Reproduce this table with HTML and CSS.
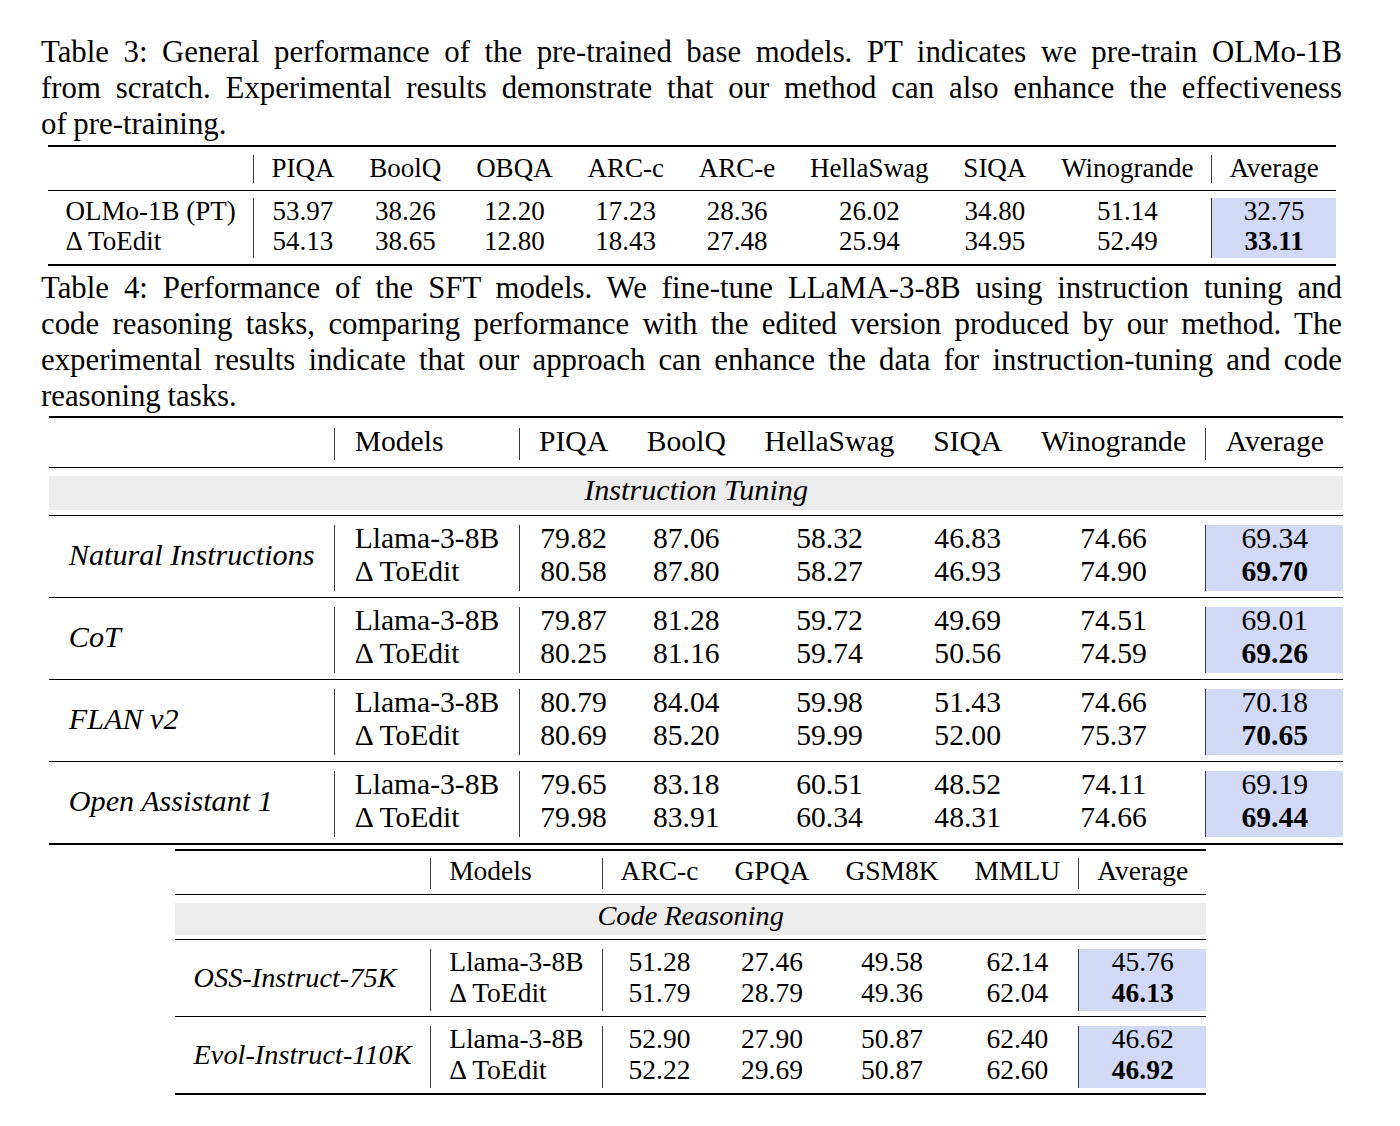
FILE: index.html
```html
<!DOCTYPE html>
<html lang="en">
<head>
<meta charset="utf-8">
<title>Tables 3 and 4</title>
<link rel="stylesheet" href="styles.css">
</head>
<body>
<div class="page">
  <p class="caption cap3">
    <span class="ln">Table 3: General performance of the pre-trained base models. PT indicates we pre-train OLMo-1B</span>
    <span class="ln">from scratch. Experimental results demonstrate that our method can also enhance the effectiveness</span>
    <span class="ln last">of pre-training.</span>
  </p>
  <table class="t t3">
    <thead>
      <tr>
        <th class="l"><div class="c"></div></th>
        <th><div class="c bar">PIQA</div></th>
        <th><div class="c">BoolQ</div></th>
        <th><div class="c">OBQA</div></th>
        <th><div class="c">ARC-c</div></th>
        <th><div class="c">ARC-e</div></th>
        <th><div class="c">HellaSwag</div></th>
        <th><div class="c">SIQA</div></th>
        <th><div class="c">Winogrande</div></th>
        <th><div class="c bar">Average</div></th>
      </tr>
    </thead>
    <tbody>
      <tr>
        <td class="l"><div class="c"><div>OLMo-1B (PT)</div><div>Δ ToEdit</div></div></td>
        <td><div class="c bar"><div>53.97</div><div>54.13</div></div></td>
        <td><div class="c"><div>38.26</div><div>38.65</div></div></td>
        <td><div class="c"><div>12.20</div><div>12.80</div></div></td>
        <td><div class="c"><div>17.23</div><div>18.43</div></div></td>
        <td><div class="c"><div>28.36</div><div>27.48</div></div></td>
        <td><div class="c"><div>26.02</div><div>25.94</div></div></td>
        <td><div class="c"><div>34.80</div><div>34.95</div></div></td>
        <td><div class="c"><div>51.14</div><div>52.49</div></div></td>
        <td><div class="c bar hl"><div>32.75</div><div><b>33.11</b></div></div></td>
      </tr>
    </tbody>
  </table>

  <p class="caption cap4">
    <span class="ln">Table 4: Performance of the SFT models. We fine-tune LLaMA-3-8B using instruction tuning and</span>
    <span class="ln">code reasoning tasks, comparing performance with the edited version produced by our method. The</span>
    <span class="ln">experimental results indicate that our approach can enhance the data for instruction-tuning and code</span>
    <span class="ln last">reasoning tasks.</span>
  </p>
  <table class="t t4">
    <thead>
      <tr>
        <th class="l"><div class="c"></div></th>
        <th class="l"><div class="c bar">Models</div></th>
        <th><div class="c bar">PIQA</div></th>
        <th><div class="c">BoolQ</div></th>
        <th><div class="c">HellaSwag</div></th>
        <th><div class="c">SIQA</div></th>
        <th><div class="c">Winogrande</div></th>
        <th><div class="c bar">Average</div></th>
      </tr>
    </thead>
    <tbody>
      <tr class="band-row">
        <td colspan="8"><div class="band">Instruction Tuning</div></td>
      </tr>
      <tr>
        <td class="l"><div class="c em">Natural Instructions</div></td>
        <td class="l"><div class="c bar"><div>Llama-3-8B</div><div>Δ ToEdit</div></div></td>
        <td><div class="c bar"><div>79.82</div><div>80.58</div></div></td>
        <td><div class="c"><div>87.06</div><div>87.80</div></div></td>
        <td><div class="c"><div>58.32</div><div>58.27</div></div></td>
        <td><div class="c"><div>46.83</div><div>46.93</div></div></td>
        <td><div class="c"><div>74.66</div><div>74.90</div></div></td>
        <td><div class="c bar hl"><div>69.34</div><div><b>69.70</b></div></div></td>
      </tr>
      <tr>
        <td class="l"><div class="c em">CoT</div></td>
        <td class="l"><div class="c bar"><div>Llama-3-8B</div><div>Δ ToEdit</div></div></td>
        <td><div class="c bar"><div>79.87</div><div>80.25</div></div></td>
        <td><div class="c"><div>81.28</div><div>81.16</div></div></td>
        <td><div class="c"><div>59.72</div><div>59.74</div></div></td>
        <td><div class="c"><div>49.69</div><div>50.56</div></div></td>
        <td><div class="c"><div>74.51</div><div>74.59</div></div></td>
        <td><div class="c bar hl"><div>69.01</div><div><b>69.26</b></div></div></td>
      </tr>
      <tr>
        <td class="l"><div class="c em">FLAN v2</div></td>
        <td class="l"><div class="c bar"><div>Llama-3-8B</div><div>Δ ToEdit</div></div></td>
        <td><div class="c bar"><div>80.79</div><div>80.69</div></div></td>
        <td><div class="c"><div>84.04</div><div>85.20</div></div></td>
        <td><div class="c"><div>59.98</div><div>59.99</div></div></td>
        <td><div class="c"><div>51.43</div><div>52.00</div></div></td>
        <td><div class="c"><div>74.66</div><div>75.37</div></div></td>
        <td><div class="c bar hl"><div>70.18</div><div><b>70.65</b></div></div></td>
      </tr>
      <tr>
        <td class="l"><div class="c em">Open Assistant 1</div></td>
        <td class="l"><div class="c bar"><div>Llama-3-8B</div><div>Δ ToEdit</div></div></td>
        <td><div class="c bar"><div>79.65</div><div>79.98</div></div></td>
        <td><div class="c"><div>83.18</div><div>83.91</div></div></td>
        <td><div class="c"><div>60.51</div><div>60.34</div></div></td>
        <td><div class="c"><div>48.52</div><div>48.31</div></div></td>
        <td><div class="c"><div>74.11</div><div>74.66</div></div></td>
        <td><div class="c bar hl"><div>69.19</div><div><b>69.44</b></div></div></td>
      </tr>
    </tbody>
  </table>

  <table class="t t5">
    <thead>
      <tr>
        <th class="l"><div class="c"></div></th>
        <th class="l"><div class="c bar">Models</div></th>
        <th><div class="c bar">ARC-c</div></th>
        <th><div class="c">GPQA</div></th>
        <th><div class="c">GSM8K</div></th>
        <th><div class="c">MMLU</div></th>
        <th><div class="c bar">Average</div></th>
      </tr>
    </thead>
    <tbody>
      <tr class="band-row">
        <td colspan="7"><div class="band">Code Reasoning</div></td>
      </tr>
      <tr>
        <td class="l"><div class="c em">OSS-Instruct-75K</div></td>
        <td class="l"><div class="c bar"><div>Llama-3-8B</div><div>Δ ToEdit</div></div></td>
        <td><div class="c bar"><div>51.28</div><div>51.79</div></div></td>
        <td><div class="c"><div>27.46</div><div>28.79</div></div></td>
        <td><div class="c"><div>49.58</div><div>49.36</div></div></td>
        <td><div class="c"><div>62.14</div><div>62.04</div></div></td>
        <td><div class="c bar hl"><div>45.76</div><div><b>46.13</b></div></div></td>
      </tr>
      <tr>
        <td class="l"><div class="c em">Evol-Instruct-110K</div></td>
        <td class="l"><div class="c bar"><div>Llama-3-8B</div><div>Δ ToEdit</div></div></td>
        <td><div class="c bar"><div>52.90</div><div>52.22</div></div></td>
        <td><div class="c"><div>27.90</div><div>29.69</div></div></td>
        <td><div class="c"><div>50.87</div><div>50.87</div></div></td>
        <td><div class="c"><div>62.40</div><div>62.60</div></div></td>
        <td><div class="c bar hl"><div>46.62</div><div><b>46.92</b></div></div></td>
      </tr>
    </tbody>
  </table>
</div>
</body>
</html>
```

FILE: styles.css
```css
* { box-sizing: border-box; }

html, body {
  margin: 0;
  padding: 0;
  background: #ffffff;
  color: #000000;
  font-family: "Liberation Serif", "Times New Roman", serif;
}

.page {
  width: 1400px;
  padding: 34px 0 0 41px;
}

.caption {
  width: 1301px;
  margin: 0;
  font-size: 30.8px;
  line-height: 36px;
  word-spacing: -1px;
}

.cap4 { margin-top: 4px; }

.ln {
  display: block;
  text-align: justify;
  text-align-last: justify;
}

.ln.last { text-align-last: left; }

/* tables */
.t {
  border-collapse: separate;
  border-spacing: 0;
  border-top: 2px solid #000;
}

.t th,
.t td {
  padding: 0;
  vertical-align: middle;
  text-align: center;
  font-weight: normal;
  white-space: nowrap;
}

.t .l { text-align: left; }

.t .c { padding: 0 0.655em; }

.t .bar { border-left: 1px solid #3a3a3a; }

.t .hl { background: #d1d9f6; }

.t .em { font-style: italic; }

.t b { font-weight: bold; }

.t thead th { border-bottom: 1px solid #000; }

.t tbody td { border-bottom: 1px solid #000; }

.t tbody tr:last-child td { border-bottom: 2px solid #000; }

.band {
  background: #ececec;
  font-style: italic;
  text-align: center;
}

/* Table 3 */
.t3 {
  font-size: 27px;
  margin: 3px 0 0 7px;
}
.t3 .c { padding: 0 0.645em; }
.t3 thead th { padding: 8px 0 7px; }
.t3 thead .c { line-height: 26px; padding-bottom: 2px; }
.t3 tbody td { padding: 7px 0 6px; }
.t3 tbody .c > div { line-height: 26px; padding-bottom: 4px; }

/* Table 4 */
.t4 {
  font-size: 29.6px;
  margin: 2px 0 0 8px;
}
.t4 thead th { padding: 10px 0 7px; }
.t4 thead .c { line-height: 26px; padding-bottom: 6px; }
.t4 tbody td { padding: 9px 0 6px; }
.t4 tbody .c > div { line-height: 27px; padding-bottom: 6px; }
.t4 tbody .c.em { font-size: 1.02em; line-height: 27px; padding-bottom: 6px; }
.t4 .band-row td { padding: 8px 0 5px; }
.t4 .band { font-size: 1.02em; line-height: 28px; padding-bottom: 6px; }

/* Table 5 */
.t5 {
  font-size: 27.5px;
  margin: 4px 0 0 134px;
}
.t5 thead th { padding: 7px 0 5px; }
.t5 thead .c { line-height: 25px; padding-bottom: 6px; }
.t5 tbody td { padding: 9px 0 5px; }
.t5 tbody .c > div { line-height: 25px; padding-bottom: 6px; }
.t5 tbody .c.em { font-size: 1.03em; line-height: 25px; padding-bottom: 6px; }
.t5 .band-row td { padding: 8px 0 4px; }
.t5 .band { font-size: 1.03em; line-height: 26px; padding-bottom: 6px; }
```
